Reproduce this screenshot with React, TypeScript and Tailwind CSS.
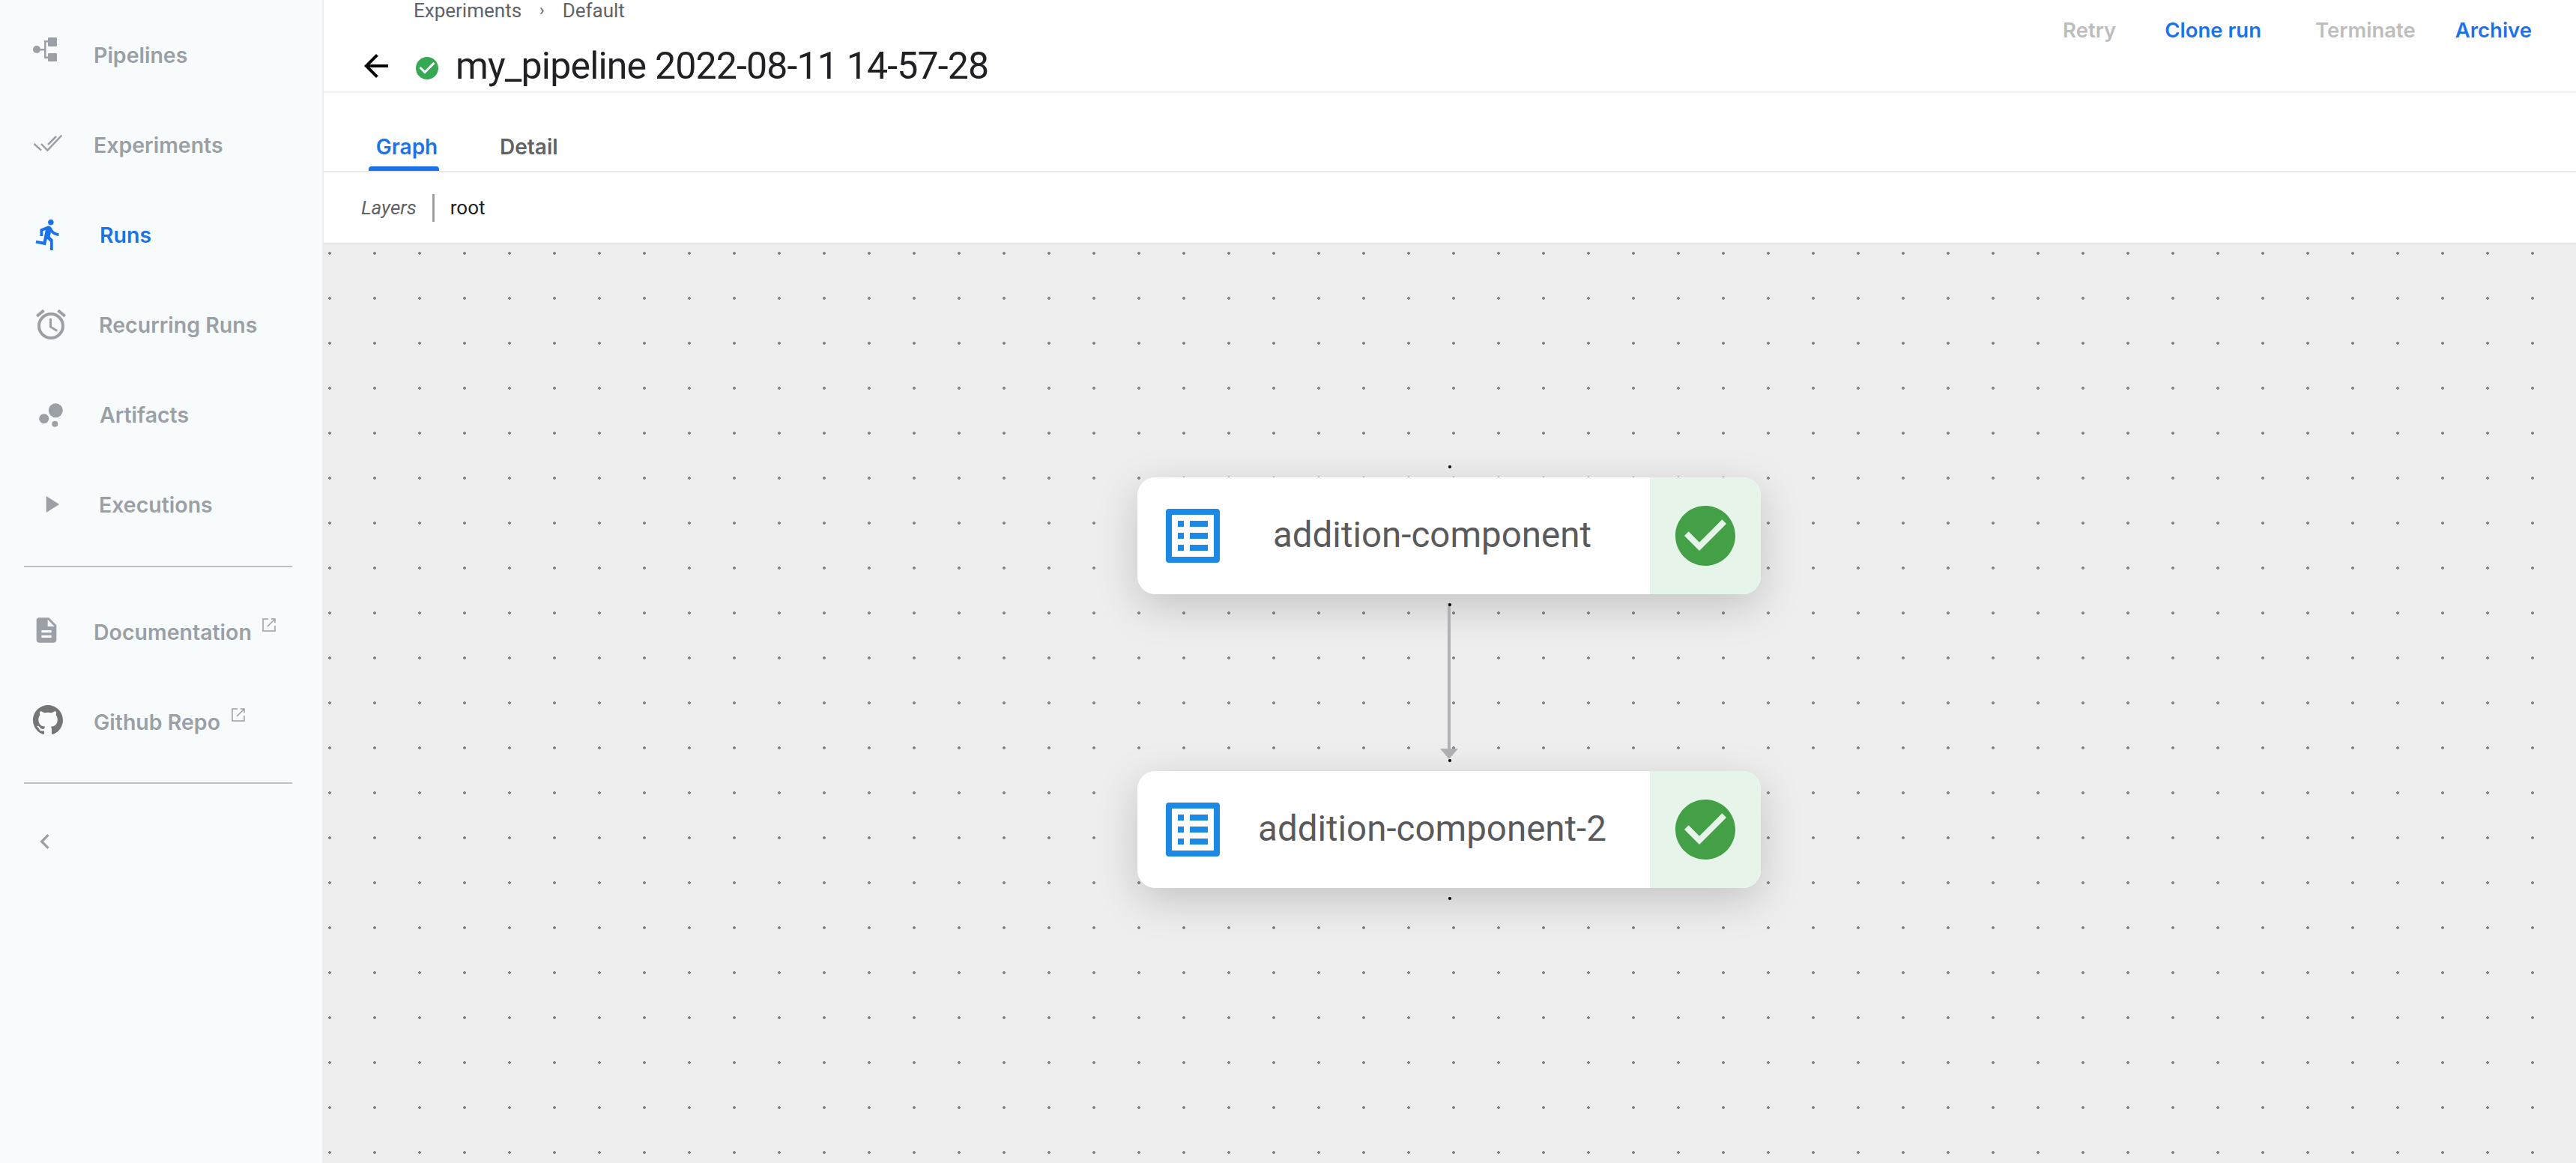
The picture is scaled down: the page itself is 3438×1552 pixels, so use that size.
import React from "react";
import {
  MdDirectionsRun,
  MdAccessAlarm,
  MdPlayArrow,
  MdDescription,
  MdChevronLeft,
  MdArrowBack,
  MdCheckCircle,
} from "react-icons/md";

const GRAY = "#9aa0a6";

function PipelinesIcon() {
  return (
    <svg width="32" height="32" viewBox="0 0 32 32" fill={GRAY}>
      <circle cx="5" cy="16" r="5" />
      <rect x="20" y="0" width="12" height="12" rx="1" />
      <rect x="20" y="21" width="12" height="11" rx="1" />
      <path d="M10 15h5V4h5v2.500h-2.500v19H20V28h-5V17.500h-5z" />
    </svg>
  );
}

function ExperimentsIcon() {
  return (
    <svg width="38" height="22" viewBox="0 0 38 22" fill="none" stroke={GRAY} strokeWidth="2.5">
      <path d="M0.500 12L10 20.700" />
      <path d="M10 12L18.300 20.700L37.500 0.500" />
      <path d="M19 13L30 2" />
    </svg>
  );
}

function ArtifactsIcon() {
  return (
    <svg width="33" height="34" viewBox="0 0 33 34" fill={GRAY}>
      <circle cx="22.300" cy="11.700" r="9.500" />
      <circle cx="6.700" cy="22.700" r="6.500" />
      <circle cx="21.300" cy="29.700" r="4" />
    </svg>
  );
}

function GithubIcon() {
  return (
    <svg width="40" height="40" viewBox="0 0 16 16" fill="#757575">
      <path d="M8 0C3.580 0 0 3.580 0 8c0 3.540 2.290 6.530 5.470 7.590.4.070.55-.17.55-.38 0-.19-.01-.82-.01-1.490-2.010.37-2.530-.49-2.690-.94-.09-.23-.48-.94-.82-1.130-.28-.15-.68-.52-.01-.53.63-.01 1.080.58 1.230.82.72 1.210 1.870.87 2.330.66.070-.52.280-.87.510-1.070-1.780-.2-3.640-.89-3.640-3.950 0-.87.310-1.590.820-2.150-.080-.2-.360-1.020.080-2.120 0 0 .670-.210 2.200.820.640-.180 1.320-.270 2-.270s1.360.090 2 .270c1.530-1.040 2.200-.820 2.200-.820.440 1.100.160 1.920.080 2.120.510.560.820 1.270.820 2.150 0 3.070-1.870 3.750-3.650 3.950.290.250.540.730.540 1.480 0 1.070-.010 1.930-.010 2.200 0 .210.150.460.550.380A8.013 8.013 0 0016 8c0-4.420-3.580-8-8-8z" />
    </svg>
  );
}

function ExternalIcon() {
  return (
    <svg width="18" height="18" viewBox="0 0 18 18" fill="none" stroke={GRAY} strokeWidth="1.500">
      <path d="M8 1H1v16h16v-7" />
      <path d="M7 11L17 1M12 1h5v5" />
    </svg>
  );
}

function ListAltIcon() {
  return (
    <svg width="96" height="96" viewBox="0 0 24 24" fill="#1e88e5" className="shrink-0">
      <path d="M19 5v14H5V5h14m1.100-2H3.900c-.5 0-.9.4-.9.9v16.200c0 .4.4.9.9.9h16.200c.4 0 .9-.5.9-.9V3.900c0-.5-.5-.9-.9-.9z" />
      <path d="M11 7h6v2h-6zM11 11h6v2h-6zM11 15h6v2h-6zM7 7h2v2H7zM7 11h2v2H7zM7 15h2v2H7z" />
    </svg>
  );
}

function NavItem({
  icon,
  label,
  active,
  iconBox,
  labelClass,
  labelExtra,
}: {
  icon: React.ReactNode;
  label: string;
  active?: boolean;
  iconBox: string;
  labelClass?: string;
  labelExtra?: React.ReactNode;
}) {
  return (
    <div className="flex h-[120px] items-center">
      <div className={iconBox}>{icon}</div>
      <span
        className={`text-[28.500px] font-semibold leading-none whitespace-nowrap ${labelClass ?? "mt-[2px]"} ${
          active ? "text-[#1a73e8]" : "text-[#9aa0a6]"
        }`}
      >
        {label}
      </span>
      {labelExtra}
    </div>
  );
}

function Node({ label, className }: { label: string; className: string }) {
  return (
    <div
      className={`absolute flex h-[156px] w-[832px] overflow-hidden rounded-[24px] bg-white ${className}`}
    >
      <div className="flex flex-1 items-center pl-[26px]">
        <ListAltIcon />
        <div className="flex-1 pr-[19px] text-center font-['Roboto',sans-serif] text-[47.500px] leading-none text-[#5a5a5c]">
          {label}
        </div>
      </div>
      <div className="flex w-[148px] items-center justify-center bg-[#e6f4ea]">
        <MdCheckCircle size={96} color="#43a047" />
      </div>
    </div>
  );
}

export default function App() {
  return (
    <div className="flex h-[1552px] w-[3438px] overflow-hidden bg-white font-['Inter',sans-serif]">
      <aside className="flex w-[432px] shrink-0 flex-col border-r-2 border-[#e8eef2] bg-[#f8fbfc] pt-[13px]">
        <NavItem
          iconBox="mr-[49px] ml-[44px] -mt-[14px] flex h-[32px] w-[32px] items-center"
          icon={<PipelinesIcon />}
          label="Pipelines"
        />
        <NavItem
          iconBox="mr-[42px] ml-[45px] -mt-[5px] flex h-[22px] w-[38px] items-center"
          icon={<ExperimentsIcon />}
          label="Experiments"
        />
        <NavItem
          iconBox="mr-[45px] ml-[42px] flex h-[46px] w-[46px] items-center justify-center"
          icon={<MdDirectionsRun size={52} color="#1a73e8" />}
          label="Runs"
          active
        />
        <NavItem
          iconBox="mr-[40px] ml-[44px] -mt-[1px] flex h-[48px] w-[48px] items-center justify-center"
          icon={<MdAccessAlarm size={48} color={GRAY} />}
          label="Recurring Runs"
        />
        <NavItem
          iconBox="mr-[48px] ml-[52px] flex h-[34px] w-[33px] items-center"
          icon={<ArtifactsIcon />}
          label="Artifacts"
        />
        <NavItem
          iconBox="mr-[45px] ml-[49px] flex h-[38px] w-[38px] items-center justify-center"
          icon={<MdPlayArrow size={48} color={GRAY} />}
          label="Executions"
        />
        <div className="mx-[32px] mt-[22px] mb-[27px] h-[2px] w-[358px] bg-[#bdc1c6]" />
        <NavItem
          iconBox="mr-[43px] ml-[42px] -mt-[7px] flex h-[40px] w-[40px] items-center justify-center"
          icon={<MdDescription size={40} color={GRAY} />}
          label="Documentation"
          labelClass="mt-0"
          labelExtra={
            <span className="-mt-[21px] ml-[14px]">
              <ExternalIcon />
            </span>
          }
        />
        <NavItem
          iconBox="mr-[41px] ml-[44px] -mt-[7px] flex h-[40px] w-[40px] items-center"
          icon={<GithubIcon />}
          label="Github Repo"
          labelClass="mt-0"
          labelExtra={
            <span className="-mt-[21px] ml-[15px]">
              <ExternalIcon />
            </span>
          }
        />
        <div className="mx-[32px] mt-[20px] h-[2px] w-[358px] bg-[#bdc1c6]" />
        <div className="mt-[57px] ml-[40px]">
          <MdChevronLeft size={40} color={GRAY} />
        </div>
      </aside>

      <main className="flex min-w-0 flex-1 flex-col">
        <header className="relative flex h-[124px] shrink-0 items-start justify-between border-b-2 border-[#f0f0f0] font-['Roboto',sans-serif]">
          <div className="flex flex-col">
            <div className="ml-[120px] flex h-[28px] items-center text-[26px] leading-none text-[#5f6368]">
              <span>Experiments</span>
              <span className="mx-[24px] text-[22px]">›</span>
              <span>Default</span>
            </div>
            <div className="mt-[35px] flex items-center">
              <MdArrowBack size={48} color="#000" className="ml-[46px]" />
              <MdCheckCircle size={36} color="#34a853" className="mt-[5px] ml-[26px]" />
              <h1 className="ml-[20px] text-[50px] font-normal leading-none tracking-[-0.82px] whitespace-nowrap text-[#202124]">
                my_pipeline 2022-08-11 14-57-28
              </h1>
            </div>
          </div>
          <div className="flex items-center pt-[27px] font-['Inter',sans-serif] text-[27.500px] font-semibold leading-none">
            <span className="text-[#bdbdbd]">Retry</span>
            <span className="ml-[65px] text-[#1a73e8]">Clone run</span>
            <span className="ml-[72px] text-[#bdbdbd]">Terminate</span>
            <span className="mr-[59px] ml-[53px] text-[#1a73e8]">Archive</span>
          </div>
        </header>

        <nav className="flex h-[106px] shrink-0 items-end border-b-2 border-[#e8e8e8] pl-[60px] font-['Inter',sans-serif] text-[28px] font-semibold">
          <div className="relative flex h-[62px] w-[94px] justify-center pt-[9px] pl-[8px] text-[#1a73e8]">
            Graph
            <div className="absolute bottom-0 left-0 h-[6px] w-[94px] rounded-t-[4px] bg-[#1a73e8]" />
          </div>
          <div className="ml-[81px] flex h-[62px] pt-[9px] text-[#5f6368]">Detail</div>
        </nav>

        <div className="flex h-[94px] shrink-0 items-center pl-[50px] font-['Roboto',sans-serif] text-[26px] leading-none">
          <span className="italic text-[#5f6368]">Layers</span>
          <div className="mx-[21px] h-[37px] w-[3px] bg-[#a0a0a0]" />
          <span className="text-[#202124]">root</span>
        </div>

        <section className="relative flex-1 border-t-2 border-[#e6e6e6] bg-[#eeeeee] bg-[radial-gradient(circle,#85858c_1.6px,transparent_2.2px)] bg-[length:60px_60px] bg-[position:-22px_-18px]">
          <div className="absolute top-[295px] left-[1501px] h-[4px] w-[4px] rounded-full bg-black" />
          <div className="absolute top-[311px] left-[1086px] h-[156px] w-[832px] rounded-[24px] shadow-[0_16px_56px_rgba(0,0,0,0.18)]" />
          <Node label="addition-component" className="top-[311px] left-[1086px]" />
          <div className="absolute top-[479px] left-[1500px] h-[195px] w-[4px] bg-[#b0b0b5]" />
          <div className="absolute top-[479px] left-[1501px] h-[4px] w-[4px] rounded-full bg-black" />
          <svg
            className="absolute top-[673px] left-[1490px]"
            width="24"
            height="14"
            viewBox="0 0 24 14"
            fill="#b0b0b5"
          >
            <path d="M0 0h24L12 14z" />
          </svg>
          <div className="absolute top-[687px] left-[1501px] h-[4px] w-[4px] rounded-full bg-black" />
          <div className="absolute top-[703px] left-[1086px] h-[156px] w-[832px] rounded-[24px] shadow-[0_16px_56px_rgba(0,0,0,0.18)]" />
          <Node label="addition-component-2" className="top-[703px] left-[1086px]" />
          <div className="absolute top-[871px] left-[1501px] h-[4px] w-[4px] rounded-full bg-black" />
        </section>
      </main>
    </div>
  );
}
